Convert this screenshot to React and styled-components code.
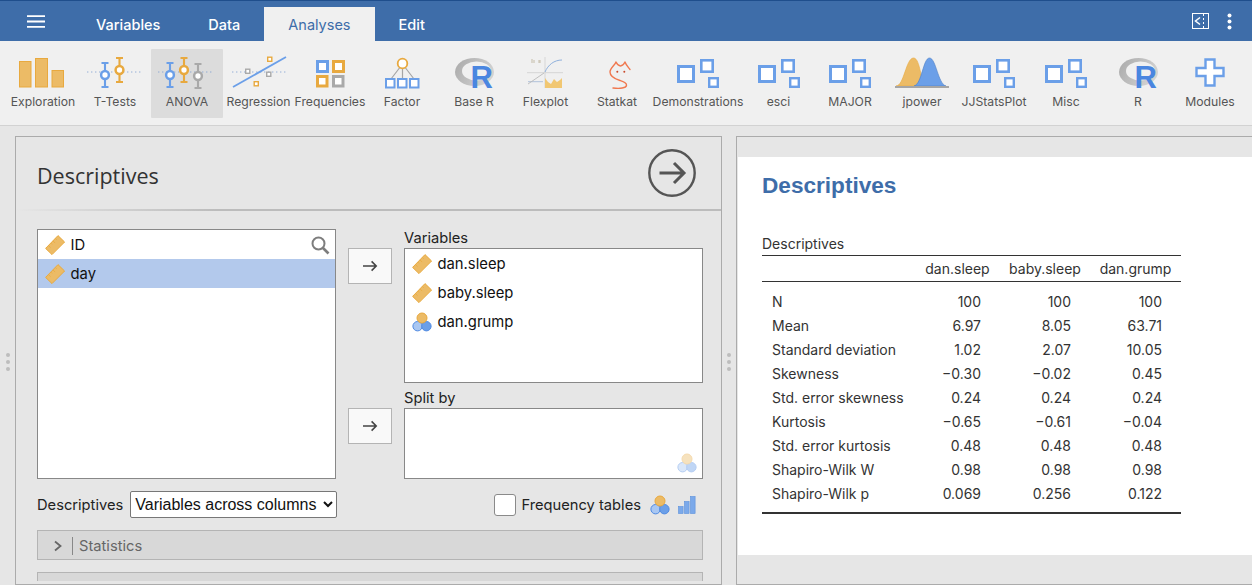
import React from "react";
import styled, { createGlobalStyle } from "styled-components";

const GlobalStyle = createGlobalStyle`
  html, body {
    margin: 0;
    padding: 0;
    height: 585px;
    overflow: hidden;
    background: #e6e6e6;
    font-family: Inter, "Liberation Sans", sans-serif;
  }
`;

const BLUE = "#3e6da9";
const ORANGE = "#e8a93f";
const ORANGE_FILL = "#ecbb66";
const ICON_BLUE = "#6b9fe8";
const GRAY = "#a9a9a9";

const Page = styled.div`
  width: 1252px;
  height: 585px;
  display: flex;
  flex-direction: column;
  overflow: hidden;
`;

const TopBar = styled.div`
  height: 40px;
  flex: none;
  display: flex;
  align-items: flex-end;
  background: ${BLUE};
  border-top: 1px solid #1f4e8c;
`;

const MenuButton = styled.div`
  width: 72px;
  height: 40px;
  display: flex;
  align-items: center;
  justify-content: center;
  color: #fff;
`;

const Tab = styled.div`
  height: 34px;
  padding: 0 24px;
  display: flex;
  align-items: center;
  font-size: 14.5px;
  font-weight: ${(p) => (p.$active ? 400 : 500)};
  color: ${(p) => (p.$active ? BLUE : "#fff")};
  background: ${(p) => (p.$active ? "#f0f0f0" : "transparent")};
`;

const TopActions = styled.div`
  margin-left: auto;
  height: 40px;
  padding-right: 20px;
  display: flex;
  align-items: center;
  gap: 18px;
`;

const Ribbon = styled.div`
  flex: none;
  display: flex;
  padding: 8px 0 0 7px;
  box-sizing: border-box;
  background: #f0f0f0;
  border-bottom: 1px solid #d2d2d2;
  height: 85px;
`;

const RibbonItem = styled.div`
  width: ${(p) => p.$w}px;
  height: 69px;
  flex: none;
  display: flex;
  flex-direction: column;
  align-items: center;
  padding-top: 3px;
  box-sizing: border-box;
  border-radius: 1px;
  background: ${(p) => (p.$active ? "#dcdcdc" : "transparent")};

  svg {
    flex: none;
    overflow: visible;
  }
`;

const RibbonLabel = styled.div`
  margin-top: 3px;
  font-size: 12.2px;
  line-height: 14px;
  color: #555;
  white-space: nowrap;
`;

const Main = styled.div`
  flex: 1;
  min-height: 0;
  display: flex;
  padding-top: 10px;
`;

const Splitter = styled.div`
  width: ${(p) => p.$w}px;
  flex: none;
  display: flex;
  flex-direction: column;
  align-items: center;
  justify-content: center;
  gap: 3px;
  padding-top: 3px;

  span {
    width: 4px;
    height: 4px;
    border-radius: 50%;
    background: #bdbdbd;
  }
`;

const OptionsPanel = styled.div`
  width: 707px;
  flex: none;
  box-sizing: border-box;
  display: flex;
  flex-direction: column;
  border: 1px solid #ababab;
  background: #e6e6e6;
`;

const OptionsHeader = styled.div`
  height: 72px;
  flex: none;
  box-sizing: border-box;
  padding: 0 25px 0 21px;
  display: flex;
  align-items: center;
  justify-content: space-between;
`;

const OptionsTitle = styled.h1`
  margin: 5px 0 0;
  font-family: "Open Sans", sans-serif;
  font-size: 21.5px;
  font-weight: 400;
  color: #333;
`;

const HeaderRule = styled.div`
  height: 2px;
  flex: none;
  background: linear-gradient(to right, #e6e6e6 0, #bcbcbc 200px, #bcbcbc 100%);
`;

const OptionsBody = styled.div`
  height: 370px;
  flex: none;
  overflow: hidden;
  padding: 18px 18px 0 21px;
  box-sizing: border-box;
  width: 100%;
`;

const VariablesArea = styled.div`
  display: flex;
  height: 250px;
`;

const ListBox = styled.div`
  position: relative;
  box-sizing: border-box;
  background: #fff;
  border: 1px solid #888;
`;

const Supplier = styled(ListBox)`
  width: 299px;
  height: 250px;
  flex: none;
  overflow: hidden;
`;

const Targets = styled.div`
  flex: 1;
  display: flex;
  flex-direction: column;
  gap: 6px;
`;

const TargetRow = styled.div`
  display: flex;
  padding-left: 12px;
  gap: 12px;
`;

const ArrowButton = styled.div`
  width: 44px;
  height: 36px;
  box-sizing: border-box;
  margin-top: 19px;
  flex: none;
  display: flex;
  align-items: center;
  justify-content: center;
  background: #f9f9f9;
  border: 1px solid #b4b4b4;
`;

const TargetColumn = styled.div`
  flex: 1;
`;

const TargetLabel = styled.div`
  height: 19px;
  font-size: 14.7px;
  line-height: 18px;
  color: #222;
`;

const TargetBox = styled(ListBox)`
  height: ${(p) => p.$h}px;
`;

const VarRow = styled.div`
  height: 29px;
  display: flex;
  align-items: center;
  gap: 6px;
  padding-left: 6.5px;
  font-size: 14.8px;
  color: #111;
  background: ${(p) => (p.$selected ? "#b3c9ec" : "transparent")};
`;

const SearchIcon = styled.svg`
  position: absolute;
  top: 6px;
  right: 5px;
`;

const CornerIcon = styled.div`
  position: absolute;
  right: 5px;
  bottom: 5px;
  opacity: 0.42;
  line-height: 0;
`;

const ControlsRow = styled.div`
  margin-top: 12px;
  height: 27px;
  display: flex;
  align-items: center;
  justify-content: space-between;
  padding-right: 7px;
`;

const ControlGroup = styled.div`
  display: flex;
  align-items: center;
  gap: ${(p) => p.$gap}px;
`;

const FormatIcons = styled(ControlGroup)`
  margin-left: 3px;
`;

const ControlLabel = styled.label`
  font-size: 14.7px;
  color: #222;
`;

const Select = styled.select`
  width: 207px;
  height: 27px;
  box-sizing: border-box;
  padding: 0;
  font-family: "Liberation Sans", sans-serif;
  font-size: 16px;
  color: #111;
  background-color: #fff;
  border: 1px solid #777;
  border-radius: 2px;
`;

const Checkbox = styled.span`
  width: 22px;
  height: 22px;
  box-sizing: border-box;
  background: #fff;
  border: 1px solid #8a8a8a;
  border-radius: 3px;
`;

const Collapse = styled.div`
  margin-top: 12px;
  height: 30px;
  box-sizing: border-box;
  display: flex;
  align-items: center;
  padding: 1px 0 0 15px;
  background: #d8d8d8;
  border: 1px solid #b4b4b4;
  font-size: 14.7px;
  color: #666;
`;

const CollapseDivider = styled.span`
  width: 1px;
  height: 18px;
  margin: 0 6px 0 9px;
  background: #888;
`;

const ResultsPanel = styled.div`
  flex: 1;
  min-width: 0;
  box-sizing: border-box;
  display: flex;
  flex-direction: column;
  border: 1px solid #ababab;
  border-right: none;
  padding: 20px 0 29px 1px;
  background: #e6e6e6;
`;

const ResultsSheet = styled.div`
  flex: 1;
  background: #fff;
  padding: 16px 0 0 24px;
`;

const ResultsTitle = styled.h2`
  margin: 0;
  font-family: "Liberation Sans", sans-serif;
  font-size: 22.6px;
  line-height: 26px;
  font-weight: 700;
  color: ${BLUE};
`;

const Table = styled.table`
  margin-top: 35px;
  width: 419px;
  table-layout: fixed;
  border-collapse: collapse;
  border-bottom: 2px solid #333;
  font-size: 14px;
  color: #333;
`;

const Caption = styled.caption`
  height: 21px;
  text-align: left;
  line-height: 20px;
`;

const HeadCell = styled.th`
  height: 25px;
  padding: 0;
  font-weight: 400;
  text-align: center;
  border-top: 1px solid #333;
  border-bottom: 1px solid #333;
`;

const Row = styled.tr`
  &:first-child td {
    padding-top: 7px;
  }
  &:last-child td {
    padding-bottom: 7px;
  }
`;

const NameCell = styled.td`
  height: 24px;
  padding: 0 0 0 10px;
  white-space: nowrap;
`;

const ValueCell = styled.td`
  height: 24px;
  padding: 0 19px 0 0;
  text-align: right;
`;

const ruler = (
  <svg width="20" height="20" viewBox="0 0 20 20">
    <path d="M0.6 13.4L13 0.6L19.6 7L7 19.6Z" fill={ORANGE_FILL} stroke={ORANGE} strokeWidth="1" />
    <path d="M3.4 10.5l2.2 2.2M5.8 8.1l1.3 1.3M8 5.9l2.2 2.2M10.4 3.5l1.3 1.3" stroke={ORANGE} strokeWidth="0.8" fill="none" />
  </svg>
);

const Nominal = ({ size = 20 }) => (
  <svg width={size} height={size} viewBox="0 0 20 20">
    <circle cx="5.6" cy="14.2" r="4.7" fill="#a9c7f2" stroke="#4f8ae2" strokeWidth="1" />
    <circle cx="14.4" cy="14.2" r="4.7" fill="#6b9fe8" stroke="#4f8ae2" strokeWidth="1" />
    <circle cx="10" cy="6" r="5" fill={ORANGE_FILL} stroke={ORANGE} strokeWidth="1" />
  </svg>
);

const SmallArrow = () => (
  <svg width="16" height="14" viewBox="0 0 16 14">
    <path d="M1 7H14.2M9.6 2.4L14.2 7L9.6 11.6" fill="none" stroke="#444" strokeWidth="1.6" />
  </svg>
);

const Whisker = ({ x, top, bottom, mid, color }) => (
  <g stroke={color} strokeWidth="2.1" fill="#fff">
    <path d={`M${x} ${top}V${bottom}M${x - 3.5} ${top}H${x + 3.5}M${x - 3.5} ${bottom}H${x + 3.5}`} fill="none" />
    <circle cx={x} cy={mid} r="3.9" strokeWidth="2.5" />
  </g>
);

const Dotted = ({ from, to }) => (
  <path d={`M${from} 72H${to}`} stroke="#7f9fd0" strokeWidth="0.8" strokeDasharray="1.4 2.6" />
);

const Sq = ({ x, y, s, color, w = 2.4 }) => (
  <rect x={x + w / 2} y={y + w / 2} width={s - w} height={s - w} fill="#fff" stroke={color} strokeWidth={w} />
);

const Icon = ({ children }) => (
  <svg width="60" height="40" viewBox="-30 52 60 40">
    {children}
  </svg>
);

const ModuleIcon = () => (
  <Icon>
    <Sq x={-21} y={65} s={18} color={ICON_BLUE} w={3} />
    <Sq x={2} y={59} s={14} color={ICON_BLUE} w={2.6} />
    <Sq x={10} y={77} s={11} color={ICON_BLUE} w={2.4} />
  </Icon>
);

const RLogo = () => (
  <Icon>
    <defs>
      <linearGradient id="rring" x1="0" y1="0" x2="1" y2="0.4">
        <stop offset="0" stopColor="#a9a9a9" />
        <stop offset="1" stopColor="#d2d2d2" />
      </linearGradient>
    </defs>
    <ellipse cx="0.5" cy="72" rx="19.5" ry="14" fill="url(#rring)" />
    <ellipse cx="2.5" cy="71" rx="14.5" ry="9.5" fill="#f0f0f0" />
    <text x="-3.5" y="88" fontFamily="Liberation Sans" fontWeight="700" fontSize="31" fill="#4a86e0">R</text>
  </Icon>
);

const ribbon = [
  { name: "Exploration", w: 72, icon: (
    <Icon>
      <g fill={ORANGE_FILL} stroke={ORANGE} strokeWidth="1">
        <rect x="-23.5" y="61.5" width="11.5" height="25.5" />
        <rect x="-7.5" y="58.5" width="12" height="28.5" />
        <rect x="9" y="70.5" width="11.5" height="16.5" />
      </g>
    </Icon>
  ) },
  { name: "T-Tests", w: 72, icon: (
    <Icon>
      <Dotted from={-28} to={26} />
      <Whisker x={-10} top={63} bottom={87} mid={75} color={ICON_BLUE} />
      <Whisker x={4.5} top={58} bottom={82} mid={70} color={ORANGE} />
    </Icon>
  ) },
  { name: "ANOVA", w: 72, active: true, icon: (
    <Icon>
      <Dotted from={-29} to={25} />
      <Whisker x={-17} top={63} bottom={87} mid={75} color={ICON_BLUE} />
      <Whisker x={-3} top={58} bottom={82} mid={70} color={ORANGE} />
      <Whisker x={11} top={64} bottom={88} mid={76} color={GRAY} />
    </Icon>
  ) },
  { name: "Regression", w: 71, icon: (
    <Icon>
      <Dotted from={-27} to={27} />
      <path d="M-26 87L27 57" stroke={ICON_BLUE} strokeWidth="1.8" />
      <Sq x={-14} y={68.5} s={5.5} color={GRAY} w={1.4} />
      <Sq x={8} y={56.5} s={5.5} color={ORANGE} w={1.4} />
      <Sq x={7} y={71.5} s={5.5} color={GRAY} w={1.4} />
      <Sq x={-5.5} y={81} s={5.5} color={ORANGE} w={1.4} />
    </Icon>
  ) },
  { name: "Frequencies", w: 72, icon: (
    <Icon>
      <Sq x={-14} y={60} s={13} color={ICON_BLUE} w={3} />
      <Sq x={2} y={60} s={13} color={ORANGE} w={3} />
      <Sq x={-14} y={75} s={12.5} color={ORANGE} w={3} />
      <Sq x={2} y={75} s={12.5} color={GRAY} w={3} />
    </Icon>
  ) },
  { name: "Factor", w: 72, icon: (
    <Icon>
      <path d="M0.5 64L-11 79M0.5 64V79M0.5 64L12 79" stroke="#a5a5a5" strokeWidth="1.2" />
      <circle cx="0.5" cy="63.5" r="4.8" fill="#fff" stroke={ORANGE} strokeWidth="1.8" />
      <Sq x={-17} y={78} s={10.5} color={ICON_BLUE} w={2} />
      <Sq x={-5} y={78} s={10.5} color={ICON_BLUE} w={2} />
      <Sq x={7} y={78} s={10.5} color={ICON_BLUE} w={2} />
    </Icon>
  ) },
  { name: "Base R", w: 72, icon: <RLogo /> },
  { name: "Flexplot", w: 71, icon: (
    <Icon>
      <path d="M-19 72.7H17M-1 57V88" stroke="#d2d2d2" strokeWidth="0.9" />
      <path d="M-18 81.7H-3" stroke="#a9bcd8" strokeWidth="0.9" />
      <path d="M-18 84L-2 73" stroke="#b9b9b9" strokeWidth="0.9" />
      <path d="M-1 72C2 65 8 60 16 60" stroke="#8fb0dc" strokeWidth="1" fill="none" />
      <path d="M-1 78L2 82L5 84L8 79L11 82L14 80L16 78V88H-1Z" fill="#f1c772" />
      <path d="M-14 59v4M-12 60v3M-7 60v3M-6 60v3" stroke="#c4bca8" strokeWidth="1" />
    </Icon>
  ) },
  { name: "Statkat", w: 72, icon: (
    <Icon>
      <path
        d="M13 69.5C11 67 9 65 8 62C7 64 5.5 66 3.5 66C2 66 0 64 -1 62C-2 65 -7 68 -7 72C-7 76 -2 79 3 80.5C7 82 10 83 9.5 85.5C9 88 3 89 -4 88"
        fill="none"
        stroke="#f0784f"
        strokeWidth="1.4"
        strokeLinecap="round"
        strokeLinejoin="round"
      />
      <circle cx="0.3" cy="71.7" r="1" fill="#c9492a" />
      <circle cx="7.3" cy="71.7" r="1" fill="#c9492a" />
    </Icon>
  ) },
  { name: "Demonstrations", w: 90, icon: <ModuleIcon /> },
  { name: "esci", w: 71, icon: <ModuleIcon /> },
  { name: "MAJOR", w: 72, icon: <ModuleIcon /> },
  { name: "jpower", w: 72, icon: (
    <Icon>
      <path d="M-26 86C-18 86 -16 58 -8.5 58C-1 58 -2 86 6 86Z" fill={ORANGE_FILL} stroke={ORANGE} strokeWidth="0.6" />
      <path d="M-8 86C0 84 1 58 7.5 58C14 58 16 84 24 86Z" fill="#6b9fe8" stroke="#4f7fc4" strokeWidth="0.6" />
      <path d="M-27 87H27" stroke="#a5a5a5" strokeWidth="2" />
    </Icon>
  ) },
  { name: "JJStatsPlot", w: 72, icon: <ModuleIcon /> },
  { name: "Misc", w: 72, icon: <ModuleIcon /> },
  { name: "R", w: 72, icon: <RLogo /> },
  { name: "Modules", w: 72, icon: (
    <Icon>
      <path
        d="M-4.5 59.5H4.5V68H13.5V76H4.5V85.5H-4.5V76H-13.5V68H-4.5Z"
        fill="#fff"
        stroke={ICON_BLUE}
        strokeWidth="2.4"
      />
    </Icon>
  ) },
];

const tableRows = [
  ["N", "100", "100", "100"],
  ["Mean", "6.97", "8.05", "63.71"],
  ["Standard deviation", "1.02", "2.07", "10.05"],
  ["Skewness", "−0.30", "−0.02", "0.45"],
  ["Std. error skewness", "0.24", "0.24", "0.24"],
  ["Kurtosis", "−0.65", "−0.61", "−0.04"],
  ["Std. error kurtosis", "0.48", "0.48", "0.48"],
  ["Shapiro-Wilk W", "0.98", "0.98", "0.98"],
  ["Shapiro-Wilk p", "0.069", "0.256", "0.122"],
];

const App = () => (
  <Page>
    <GlobalStyle />
    <TopBar>
      <MenuButton>
        <svg width="18" height="13" viewBox="0 0 18 13">
          <path d="M0 1.2H18M0 6.5H18M0 11.8H18" stroke="#fff" strokeWidth="1.8" />
        </svg>
      </MenuButton>
      <Tab>Variables</Tab>
      <Tab>Data</Tab>
      <Tab $active>Analyses</Tab>
      <Tab>Edit</Tab>
      <TopActions>
        <svg width="17" height="16" viewBox="0 0 17 16">
          <rect x="0.5" y="0.5" width="16" height="15" fill="none" stroke="#fff" strokeWidth="1" />
          <path d="M8 4.5L3.5 8L8 11.5" fill="none" stroke="#fff" strokeWidth="1.5" />
          <path d="M11.5 1V15" stroke="#fff" strokeWidth="1" strokeDasharray="2 2" />
        </svg>
        <svg width="5" height="17" viewBox="0 0 5 17">
          <circle cx="2.5" cy="2.5" r="2" fill="#fff" />
          <circle cx="2.5" cy="8.5" r="2" fill="#fff" />
          <circle cx="2.5" cy="14.5" r="2" fill="#fff" />
        </svg>
      </TopActions>
    </TopBar>

    <Ribbon>
      {ribbon.map((item) => (
        <RibbonItem key={item.name} $w={item.w} $active={item.active}>
          {item.icon}
          <RibbonLabel>{item.name}</RibbonLabel>
        </RibbonItem>
      ))}
    </Ribbon>

    <Main>
      <Splitter $w={15}>
        <span />
        <span />
        <span />
      </Splitter>

      <OptionsPanel>
        <OptionsHeader>
          <OptionsTitle>Descriptives</OptionsTitle>
          <svg width="48" height="48" viewBox="0 0 48 48">
            <circle cx="24" cy="24" r="22.7" fill="none" stroke="#555" strokeWidth="2.4" />
            <path d="M11.5 24H35.5M26 14L36 24L26 34" fill="none" stroke="#555" strokeWidth="3" />
          </svg>
        </OptionsHeader>
        <HeaderRule />
        <OptionsBody>
          <VariablesArea>
            <Supplier>
              <VarRow>{ruler}ID</VarRow>
              <VarRow $selected>{ruler}day</VarRow>
              <SearchIcon width="19" height="19" viewBox="0 0 19 19">
                <circle cx="7.5" cy="7.5" r="6" fill="none" stroke="#7d7d7d" strokeWidth="2" />
                <path d="M12 12L17.5 17.5" stroke="#7d7d7d" strokeWidth="2.6" />
              </SearchIcon>
            </Supplier>
            <Targets>
              <TargetRow>
                <ArrowButton><SmallArrow /></ArrowButton>
                <TargetColumn>
                  <TargetLabel>Variables</TargetLabel>
                  <TargetBox $h={135}>
                    <VarRow>{ruler}dan.sleep</VarRow>
                    <VarRow>{ruler}baby.sleep</VarRow>
                    <VarRow><Nominal />dan.grump</VarRow>
                  </TargetBox>
                </TargetColumn>
              </TargetRow>
              <TargetRow>
                <ArrowButton><SmallArrow /></ArrowButton>
                <TargetColumn>
                  <TargetLabel>Split by</TargetLabel>
                  <TargetBox $h={71}>
                    <CornerIcon><Nominal /></CornerIcon>
                  </TargetBox>
                </TargetColumn>
              </TargetRow>
            </Targets>
          </VariablesArea>

          <ControlsRow>
            <ControlGroup $gap={7}>
              <ControlLabel>Descriptives</ControlLabel>
              <Select defaultValue="columns">
                <option value="columns">Variables across columns</option>
                <option value="rows">Variables across rows</option>
              </Select>
            </ControlGroup>
            <ControlGroup $gap={6}>
              <Checkbox />
              <ControlLabel>Frequency tables</ControlLabel>
              <FormatIcons $gap={8}>
                <Nominal />
                <svg width="18" height="18" viewBox="0 0 18 18">
                  <g fill="#7ba9ea" stroke="#5b8fdc" strokeWidth="0.6">
                    <rect x="0.5" y="10.5" width="4.6" height="7" />
                    <rect x="6.5" y="5.5" width="4.6" height="12" />
                    <rect x="12.5" y="0.5" width="4.6" height="17" />
                  </g>
                </svg>
              </FormatIcons>
            </ControlGroup>
          </ControlsRow>

          <Collapse>
            <svg width="10" height="12" viewBox="0 0 10 12">
              <path d="M2 1.5L7.5 6L2 10.5" fill="none" stroke="#666" strokeWidth="1.8" />
            </svg>
            <CollapseDivider />
            Statistics
          </Collapse>
          <Collapse />
        </OptionsBody>
      </OptionsPanel>

      <Splitter $w={14}>
        <span />
        <span />
        <span />
      </Splitter>

      <ResultsPanel>
        <ResultsSheet>
          <ResultsTitle>Descriptives</ResultsTitle>
          <Table>
            <Caption>Descriptives</Caption>
            <colgroup>
              <col style={{ width: 153 }} />
              <col style={{ width: 85 }} />
              <col style={{ width: 90 }} />
              <col style={{ width: 91 }} />
            </colgroup>
            <thead>
              <tr>
                <HeadCell />
                <HeadCell>dan.sleep</HeadCell>
                <HeadCell>baby.sleep</HeadCell>
                <HeadCell>dan.grump</HeadCell>
              </tr>
            </thead>
            <tbody>
              {tableRows.map(([name, a, b, c]) => (
                <Row key={name}>
                  <NameCell>{name}</NameCell>
                  <ValueCell>{a}</ValueCell>
                  <ValueCell>{b}</ValueCell>
                  <ValueCell>{c}</ValueCell>
                </Row>
              ))}
            </tbody>
          </Table>
        </ResultsSheet>
      </ResultsPanel>
    </Main>
  </Page>
);

export default App;
